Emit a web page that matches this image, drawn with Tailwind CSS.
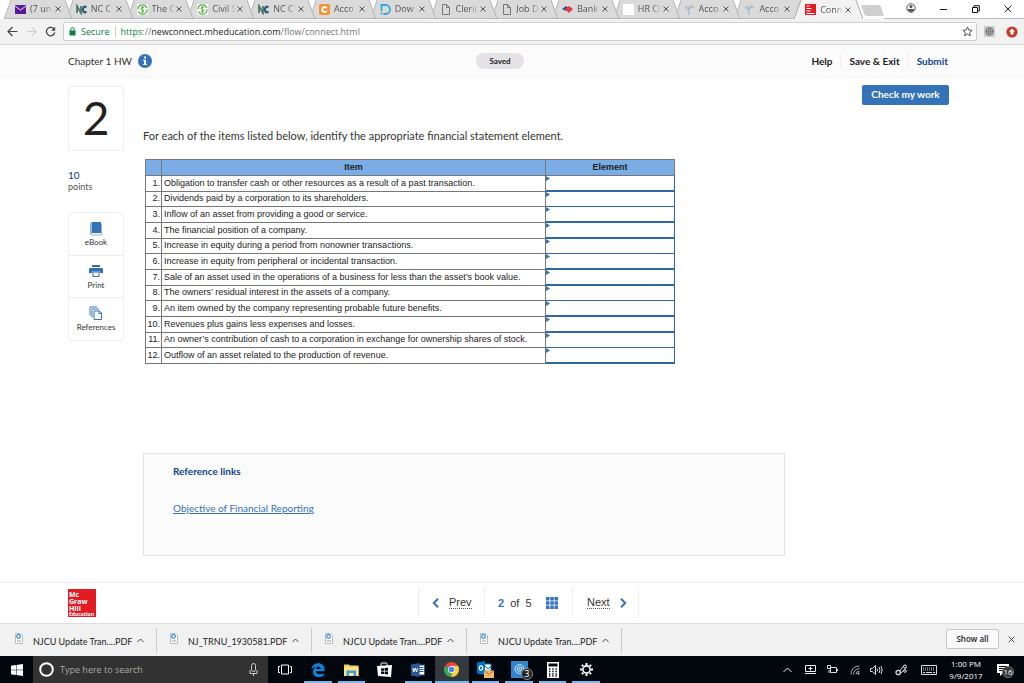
<!DOCTYPE html>
<html lang="en">
<head>
    <meta charset="UTF-8">
    <meta name="viewport" content="width=device-width, initial-scale=1.0">
    <title>Connect</title>
    <script src="https://cdn.jsdelivr.net/npm/@tailwindcss/browser@4"></script>
</head>
<body class="flex min-h-screen flex-col bg-white font-['Lato',sans-serif] text-[#333]">

    <!-- Browser tabs -->
    <div class="flex h-[19px] font-['Open_Sans',sans-serif] text-[9px] text-[#555]">
        <div id="tabs" class="flex w-[863px] shrink-0 pl-[4px]"></div>
        <button aria-label="New tab" class="-ml-[3px] mt-[5px] h-[11px] w-[24px]">
            <svg width="24" height="11" viewBox="0 0 24 11"><path d="M1 0h17q2 0 3 2l3 9H7q-2 0-3-2z" fill="#cfcfcf"/></svg>
        </button>
        <div class="flex flex-1 items-start justify-between border-b border-[#bbb] pl-[22px] pr-[12px]">
            <svg class="mt-[3px]" width="10" height="10" viewBox="0 0 10 10"><circle cx="5" cy="5" r="4.200" fill="none" stroke="#555"/><circle cx="5" cy="3.600" r="1.600" fill="#555"/><path d="M1.500 6h7l-1.500 2.200L5 9 3 8.200z" fill="#555"/></svg>
            <svg class="mt-[5px]" width="8" height="8" viewBox="0 0 8 8"><path d="M0 4.500h7" stroke="#222"/></svg>
            <svg class="mt-[5px]" width="8" height="8" viewBox="0 0 8 8"><path d="M.5 2.500h5v5h-5zM2 2V.7h5.300V6H6" fill="none" stroke="#111"/></svg>
            <svg class="mt-[5px]" width="8" height="8" viewBox="0 0 8 8"><path d="M.7.7l6.600 6.600M7.300.7L.7 7.300" stroke="#222"/></svg>
        </div>
    </div>

    <!-- Toolbar -->
    <div class="flex h-[26px] items-center border-b border-[#d5d5d5] bg-[#f2f2f2] pl-[7px] pr-[6px] font-['Open_Sans',sans-serif] text-[9px]">
        <button aria-label="Back"><svg width="11" height="11" viewBox="0 0 11 11"><path d="M10.500 5.500H1.500M5.500 1L1 5.500 5.500 10" fill="none" stroke="#444" stroke-width="1.200"/></svg></button>
        <button aria-label="Forward" class="ml-[9px]"><svg width="10" height="11" viewBox="0 0 11 11"><path d="M.5 5.500h9M5.500 1L10 5.500 5.500 10" fill="none" stroke="#ccc" stroke-width="1.200"/></svg></button>
        <button aria-label="Reload" class="ml-[8px]"><svg width="11" height="11" viewBox="0 0 11 11"><path d="M9.300 3.600A4.200 4.200 0 1 0 9.700 6.500" fill="none" stroke="#444" stroke-width="1.300"/><path d="M10.200.8v3.900H6.300z" fill="#444"/></svg></button>
        <div class="ml-[7px] flex h-[19px] flex-1 items-center rounded-[2px] border border-[#cfcfcf] bg-white pl-[5px] pr-[3px]">
            <svg width="7" height="9" viewBox="0 0 7 9"><path d="M.5 3.500h6v5h-6z" fill="#0b8043"/><path d="M1.800 4V2.400a1.700 1.700 0 0 1 3.400 0V4" fill="none" stroke="#0b8043"/></svg>
            <span class="ml-[5px] text-[#0b8043]">Secure</span>
            <span class="ml-[5px] h-[11px] w-px bg-[#ccc]"></span>
            <span class="ml-[5px] whitespace-nowrap text-[#777]"><span class="text-[#0b8043]">https</span>://<span class="text-[#222]">newconnect.mheducation.com</span>/flow/connect.html</span>
            <svg class="ml-auto" width="11" height="11" viewBox="0 0 11 11"><path d="M5.500.9l1.300 3.100 3.400.3-2.600 2.200.8 3.300-2.900-1.800-2.900 1.800.8-3.300L.8 4.300l3.400-.3z" fill="none" stroke="#555"/></svg>
        </div>
        <svg class="ml-[7px]" width="11" height="11" viewBox="0 0 11 11"><path d="M0 0h11v11H0z" fill="#ccc"/><circle cx="5.500" cy="5.500" r="4.300" fill="#777"/><path d="M1 4h9M1 7h9M5.500 1v9M3.500 1.500v8M7.500 1.500v8" stroke="#bbb" stroke-width=".5"/></svg>
        <svg class="ml-[11px]" width="12" height="12" viewBox="0 0 12 12"><circle cx="6" cy="6" r="5.600" fill="#c53929"/><path d="M6 2.500l3 3H7.500v3h-3v-3H3z" fill="#fff"/></svg>
    </div>

    <!-- Assignment header -->
    <header class="flex h-[34px] items-center bg-[#fbfbfb] pb-[2px] pl-[68px] pr-[76px] text-[10px] font-bold text-[#222]">
        <div class="flex flex-1 items-center">
            <h1 class="text-[10px] font-normal text-[#333]">Chapter 1 HW</h1>
            <button aria-label="Information" class="ml-[6px]"><svg width="14" height="14" viewBox="0 0 14 14"><circle cx="7" cy="7" r="7" fill="#3573b9"/><path d="M6 2.500h2v2H6zM5 5.700h3v4.300h1v1H5v-1h1V6.700H5z" fill="#fff"/></svg></button>
        </div>
        <span class="mr-[16px] rounded-full bg-[#e4e2e6] px-[13px] text-[8px] leading-[16px]">Saved</span>
        <nav class="flex flex-1 items-center justify-end leading-[14px]">
            <a href="#" class="pr-[8px]">Help</a>
            <a href="#" class="border-l border-[#eee] px-[8px]">Save &amp; Exit</a>
            <a href="#" class="border-l border-[#eee] pl-[8px] text-[#0f4387]">Submit</a>
        </nav>
    </header>

    <!-- Question -->
    <main class="flex flex-1 items-start pl-[68px] pr-[75px]">
        <aside class="w-[56px] shrink-0 pt-[7px]">
            <div class="flex h-[65px] items-center justify-center rounded-[3px] border border-[#eee] pb-[2px] text-[46px] text-[#222]">2</div>
            <div class="mt-[18px] text-[10px] leading-[12px] text-[#0f4387]">10</div>
            <div class="text-[9px] leading-[12px] text-[#555]">points</div>
            <div class="mt-[19px] rounded-[3px] border border-[#eee] text-[8px] leading-[10px] text-[#333]">
                <button class="flex h-[42px] w-full flex-col items-center justify-center gap-[1px]">
                    <svg width="14" height="14" viewBox="0 0 14 14"><path d="M2.500 0H12v11H2.500a1 1 0 0 0 0 2" fill="#3573b9"/><path d="M1.500 12V1.500a1 1 0 0 1 1-1M12.500 1.500v11.500H2.500" fill="none" stroke="#8fb4dd"/></svg>
                    eBook
                </button>
                <button class="flex h-[43px] w-full flex-col items-center justify-center gap-[2px] border-y border-[#eee]">
                    <svg width="14" height="14" viewBox="0 0 14 14"><path d="M3 1h8v2H3zM1 4h12l1 1v4h-3V7.500H3V9H0V5z" fill="#2f6db5"/><path d="M4 8h6v4.500H4z" fill="#fff" stroke="#2f6db5"/></svg>
                    Print
                </button>
                <button class="flex h-[42px] w-full flex-col items-center justify-center gap-[2px]">
                    <svg width="14" height="14" viewBox="0 0 14 14"><path d="M1 9.500V1h7M3 11.500V3h7" fill="none" stroke="#3573b9"/><path d="M5 5h5.500l2 2v6.500H5z" fill="#fff" stroke="#3573b9"/><path d="M10 5v2.500h2.500" fill="none" stroke="#3573b9"/></svg>
                    References
                </button>
            </div>
        </aside>

        <section class="ml-[19px] mr-[77px] min-w-0 flex-1 pt-[50px]">
            <p class="text-[11px] leading-[14px]">For each of the items listed below, identify the appropriate financial statement element.</p>
            <table class="ml-[2px] mt-[16px] h-[205px] w-[530px] table-fixed border-collapse border border-[#777] font-['Liberation_Sans',Arial,sans-serif] text-[9px] leading-[13px] text-[#222]">
                <thead>
                    <tr class="h-[16px] bg-[#7aade6]">
                        <th class="w-[16px] border border-[#777] p-0"></th>
                        <th class="border border-[#777] p-0">Item</th>
                        <th class="w-[129px] border border-[#777] p-0">Element</th>
                    </tr>
                </thead>
                <tbody id="items"></tbody>
            </table>
            <div class="mt-[89px] h-[103px] border border-[#e4e4e4] bg-[#fbfbfb] px-[29px] pt-[11px] leading-[12px]">
                <h2 class="text-[10px] font-bold text-[#0f4387]">Reference links</h2>
                <a href="#" class="mt-[25px] inline-block text-[10px] text-[#3573b9] underline">Objective of Financial Reporting</a>
            </div>
        </section>

        <button class="mt-[6px] h-[20px] w-[87px] shrink-0 rounded-[2px] bg-[#3573b9] pb-[2px] text-[10px] font-bold text-white">Check my work</button>
    </main>

    <!-- Question navigation -->
    <footer class="flex h-[41px] items-center border-t border-[#eee] pl-[68px] text-[11px]">
        <div class="h-[28px] w-[28px] shrink-0 bg-[#e31b23] pl-[1px] pt-[2px] font-['Open_Sans',sans-serif] text-[7px] font-bold leading-[7px] text-white">
            Mc<br>Graw<br>Hill<br><span class="block text-[5px] leading-[4px]">Education</span>
        </div>
        <nav class="ml-[322px] flex h-[30px] items-stretch border-x border-[#eee] font-['Liberation_Sans',Arial,sans-serif]">
            <a href="#" class="flex w-[65px] items-center pl-[13px]">
                <svg width="7" height="10" viewBox="0 0 7 10"><path d="M6 .8L1.800 5 6 9.200" fill="none" stroke="#3573b9" stroke-width="2"/></svg>
                <span class="ml-[10px] border-b border-dotted border-[#555] leading-[11px]">Prev</span>
            </a>
            <div class="flex w-[89px] items-center border-x border-[#eee] pl-[13px]">
                <span><b class="text-[#3573b9]">2</b>&nbsp; of &nbsp;5</span>
                <button aria-label="All questions" class="ml-auto mr-[14px]"><svg width="12" height="12" viewBox="0 0 12 12"><path d="M0 0h3.500v3.500H0zM4.300 0h3.500v3.500H4.300zM8.500 0H12v3.500H8.500zM0 4.300h3.500v3.500H0zM4.300 4.300h3.500v3.500H4.300zM8.500 4.300H12v3.500H8.500zM0 8.500h3.500V12H0zM4.300 8.500h3.500V12H4.300zM8.500 8.500H12V12H8.500z" fill="#3573b9"/></svg></button>
            </div>
            <a href="#" class="flex w-[65px] items-center pl-[14px]">
                <span class="mr-[10px] border-b border-dotted border-[#555] leading-[11px]">Next</span>
                <svg width="7" height="10" viewBox="0 0 7 10"><path d="M1 .8L5.200 5 1 9.200" fill="none" stroke="#3573b9" stroke-width="2"/></svg>
            </a>
        </nav>
    </footer>

    <!-- Downloads shelf -->
    <div class="flex h-[33px] items-center border-t border-[#ddd] bg-[#f1f1f1] text-[9px] text-[#222]">
        <div id="downloads" class="flex pl-[2px]"></div>
        <button class="mb-[2px] ml-auto h-[20px] w-[53px] rounded-[2px] border border-[#c8c8c8] bg-[#fafafa] font-['Open_Sans',sans-serif] text-[8px] font-semibold">Show all</button>
        <button aria-label="Close" class="mb-[2px] ml-[9px] mr-[9px]"><svg width="7" height="7" viewBox="0 0 7 7"><path d="M.7.7l5.600 5.600M6.300.7L.7 6.300" stroke="#444"/></svg></button>
    </div>

    <!-- Taskbar -->
    <div class="flex h-[27px] items-stretch bg-[#02060d] font-['Open_Sans',sans-serif] text-[8px] text-white">
        <button aria-label="Start" class="flex w-[33px] items-center justify-center"><svg width="12" height="12" viewBox="0 0 12 12"><path d="M0 1.700l5-.7v4.700H0zM5.500.9L12 0v5.700H5.500zM0 6.200h5v4.700l-5-.7zM5.500 6.200H12V12l-6.500-.9z" fill="#fff"/></svg></button>
        <div class="flex w-[235px] items-center bg-[#323232] pl-[6px] pr-[10px]">
            <svg width="15" height="15" viewBox="0 0 15 15"><circle cx="7.500" cy="7.500" r="6.300" fill="none" stroke="#fff" stroke-width="2"/></svg>
            <input type="text" aria-label="Search" placeholder="Type here to search" class="ml-[6px] min-w-0 flex-1 bg-transparent text-[9px] placeholder:text-[#aaa]">
            <svg width="9" height="13" viewBox="0 0 9 13"><rect x="2.500" y=".5" width="4" height="8" rx="2" fill="none" stroke="#ccc"/><path d="M1 7v3.500h7V7M4.500 10.500V13" fill="none" stroke="#ccc"/></svg>
        </div>
        <button aria-label="Task view" class="flex w-[33px] items-center justify-center"><svg width="14" height="11" viewBox="0 0 14 11"><path d="M3.500 1h7v9h-7zM2 2.500H.5v6H2M12 2.500h1.500v6H12" fill="none" stroke="#fff"/></svg></button>
        <div class="grid w-[302px] grid-cols-9">
            <button aria-label="Edge" class="mx-[3px] flex items-center justify-center border-b-2 border-[#76b9ed] pt-[2px]"><svg width="14" height="14" viewBox="0 0 14 14"><path d="M.4 6.300C.9 2.500 3.700.2 7.200.2c4 0 6.400 2.700 6.400 6.600v1.500H4.900c.2 2 1.700 3 3.800 3 1.500 0 2.700-.4 3.900-1.100v2.700c-1.300.7-2.800 1.100-4.600 1.100-3.700 0-6-2.100-6-5.300 0-2.200 1.200-4 3-5C2.900 4.200 1.400 5 .4 6.300zM5 6h4.700c0-1.600-.8-2.600-2.300-2.600S5.200 4.500 5 6z" fill="#0b84e0"/></svg></button>
            <button aria-label="File Explorer" class="mx-[3px] flex items-center justify-center border-b-2 border-[#76b9ed] pt-[2px]"><svg width="15" height="14" viewBox="0 0 15 14"><path d="M0 1.500h5l1 1h8.500V13H0z" fill="#f5cf62"/><path d="M0 4h14.500v9H0z" fill="#fce08a"/><path d="M2.500 13V7.500h9.500V13H9.500v-3H5v3z" fill="#3a9fe0"/></svg></button>
            <button aria-label="Store" class="mx-[3px] flex items-center justify-center"><svg width="15" height="16" viewBox="0 0 15 16"><path d="M0 4l15-1-1 12-13-1z" fill="#fff"/><path d="M4 4V2q0-1 1-1h4q1 0 1 1v2" fill="none" stroke="#fff"/><path d="M4 6.500l3-.3v2.600H4zM7.600 6.100l3.400-.3v3H7.600zM4 9.400h3V12l-3-.3zM7.600 9.400H11v3l-3.400-.3z" fill="#02060d"/></svg></button>
            <button aria-label="Word" class="mx-[3px] flex items-center justify-center border-b-2 border-[#76b9ed] pt-[2px]"><svg width="14" height="14" viewBox="0 0 14 14"><path d="M7 2h6.500v10H7z" fill="#fff" stroke="#2b579a"/><path d="M8 4.500h4.500M8 6.500h4.500M8 8.500h4.500" stroke="#2b579a"/><path d="M0 1.500L8.500 0v14L0 12.500z" fill="#2b579a"/><path d="M1.800 5l1 4 1.400-4 1.400 4 1-4" fill="none" stroke="#fff"/></svg></button>
            <button aria-label="Chrome" class="flex items-center justify-center border-b-2 border-[#76b9ed] bg-[#34393f] pt-[2px]"><svg width="15" height="15" viewBox="0 0 15 15"><path d="M7.500 7.500L1 3.700a7.500 7.500 0 0 1 13 0z" fill="#e5453a"/><path d="M7.500 7.500L1 3.700A7.500 7.500 0 0 0 7.500 15z" fill="#37a853"/><path d="M7.500 7.500V15A7.500 7.500 0 0 0 14 3.700H7.500z" fill="#fbcb3c"/><circle cx="7.500" cy="7.500" r="3.500" fill="#fff"/><circle cx="7.500" cy="7.500" r="2.800" fill="#4285f4"/></svg></button>
            <button aria-label="Outlook" class="mx-[3px] flex items-center justify-center border-b-2 border-[#76b9ed] pt-[2px]"><svg width="17" height="17" viewBox="0 0 17 17"><path d="M7 3h7v7H7z" fill="#fff" stroke="#0072c6"/><path d="M8 5l3 3 3-3" fill="none" stroke="#0072c6"/><path d="M0 1.500L8 0v14l-8-1.500z" fill="#0072c6"/><ellipse cx="4" cy="7" rx="1.700" ry="2.200" fill="none" stroke="#fff" stroke-width="1.200"/><path d="M7 9.500h10V17H7z" fill="#f0b96e"/><path d="M7 9.500l5 4 5-4" fill="none" stroke="#a8783a"/></svg></button>
            <button aria-label="Camera, 3 notifications" class="relative mx-[3px] flex items-center justify-center border-b-2 border-[#76b9ed] pt-[2px]">
                <svg width="17" height="17" viewBox="0 0 17 17"><path d="M0 0h17v17H0z" fill="#2f86cc"/><circle cx="8.500" cy="8" r="4.500" fill="none" stroke="#fff" stroke-width=".8"/><circle cx="8.500" cy="8" r="2.300" fill="none" stroke="#fff" stroke-width=".8"/><circle cx="8.500" cy="8" r=".8" fill="#fff"/></svg>
                <span class="absolute right-0 bottom-[1px] h-[12px] w-[12px] rounded-full border border-[#888] bg-[#222] text-[9px] leading-[10px]">3</span>
            </button>
            <button aria-label="Calculator" class="mx-[3px] flex items-center justify-center border-b-2 border-[#76b9ed] pt-[2px]"><svg width="12" height="16" viewBox="0 0 12 16"><path d="M0 0h12v16H0z" fill="#fff"/><path d="M1.500 1.500h9v3h-9z" fill="#02060d"/><path d="M2 7h8M2 9.500h8M2 12h8M2 14h8" stroke="#02060d" stroke-width="1.300" stroke-dasharray="1.400 1.800"/></svg></button>
            <button aria-label="Settings" class="mx-[3px] flex items-center justify-center border-b-2 border-[#76b9ed] pt-[2px]"><svg width="13" height="13" viewBox="0 0 13 13"><circle cx="6.500" cy="6.500" r="3.600" fill="none" stroke="#fff" stroke-width="1.600"/><path d="M6.500 0v2M6.500 11v2M0 6.500h2M11 6.500h2M1.900 1.900l1.400 1.400M9.700 9.700l1.400 1.400M11.100 1.900L9.700 3.300M3.300 9.700l-1.400 1.400" stroke="#fff" stroke-width="2"/></svg></button>
        </div>
        <div class="ml-auto flex items-center pr-[10px]">
            <svg width="9" height="6" viewBox="0 0 9 6"><path d="M.5 5l4-4 4 4" fill="none" stroke="#eee"/></svg>
            <svg class="ml-[13px]" width="11" height="9" viewBox="0 0 11 9"><path d="M.5.500h10v6H.5zM0 8.500h11M3.500 3.500h4M5.500 1.500v4" fill="none" stroke="#eee"/></svg>
            <svg class="ml-[11px]" width="11" height="9" viewBox="0 0 11 9"><path d="M3.500 2.500h6v5h-6zM10.500 4v2M2 5v3M.5.500h3v3h-3z" fill="none" stroke="#ddd"/></svg>
            <svg class="ml-[12px]" width="10" height="10" viewBox="0 0 10 10"><path d="M1 9.500A8 8 0 0 1 9.500 1M3.500 9.500a6 6 0 0 1 6-6M6 9.500a3.500 3.500 0 0 1 3.500-3.500" fill="none" stroke="#aaa"/><circle cx="8.500" cy="8.500" r="1" fill="#eee"/></svg>
            <svg class="ml-[10px]" width="13" height="10" viewBox="0 0 13 10"><path d="M.5 3.500h2l3-3v9l-3-3h-2zM7 3.500q1 1.500 0 3M9 2q2 3 0 6M11 1q2.500 4 0 8" fill="none" stroke="#ddd"/></svg>
            <svg class="ml-[12px]" width="13" height="12" viewBox="0 0 13 12"><path d="M4.500 7L9 1.500M6 9l5-5.500" fill="none" stroke="#ddd"/><circle cx="3.200" cy="8.500" r="2.200" fill="none" stroke="#ddd" stroke-width="1.300"/><circle cx="10" cy="2.500" r="1.500" fill="none" stroke="#ddd"/><circle cx="10" cy="7" r="1.300" fill="none" stroke="#ddd"/></svg>
            <svg class="ml-[13px]" width="16" height="10" viewBox="0 0 16 10"><path d="M.5.500h15v9H.5z" fill="none" stroke="#ddd"/><path d="M2 3h12M2 5h12" stroke="#ddd" stroke-dasharray="1 1"/><path d="M2 7.500h2M5 7.500h6M12 7.500h2" stroke="#ddd"/></svg>
            <div class="ml-[9px] w-[40px] text-center leading-[12px] whitespace-nowrap">1:00 PM<br>9/9/2017</div>
            <button aria-label="16 notifications" class="relative ml-[11px] h-[16px] w-[17px]">
                <svg width="12" height="12" viewBox="0 0 12 12"><path d="M0 0h12v9H6L3 12V9H0z" fill="#fff"/><path d="M2 2.500h8M2 4.500h8M2 6.500h5" stroke="#02060d"/></svg>
                <span class="absolute right-0 bottom-0 h-[12px] w-[12px] rounded-full border border-[#777] bg-[#333] text-[8px] leading-[10px]">16</span>
            </button>
        </div>
    </div>

    <script>
        const mail = '<path d="M0 1h11v9H0z" fill="#5a1a96"/><path d="M0 2l5.500 4L11 2" fill="none" stroke="#e6d9f2"/>';
        const nc = '<path d="M1 9V2l4 7V2" fill="none" stroke="#4b7a6b" stroke-width="1.800"/><path d="M10.500 3.200Q7 1.500 7 5.500t3.500 2.300" fill="none" stroke="#33577c" stroke-width="2.200"/>';
        const seal = '<path d="M0 0h11v11H0z" fill="#fff"/><circle cx="5.500" cy="5.500" r="4.600" fill="none" stroke="#5cb849" stroke-width="1.400" stroke-dasharray="12 2.500"/><path d="M7 3.500q-3-1-3 .7t1.700 1.500q1.800.5.8 1.800T4 7.500M5.500 2v7" fill="none" stroke="#5cb849"/>';
        const orange = '<rect width="11" height="11" rx="2" fill="#f6922f"/><path d="M7.800 3.800a2.600 2.600 0 1 0 0 3.400" fill="none" stroke="#fff" stroke-width="2"/>';
        const dice = '<path d="M1.500 7V1h4a4.500 4.500 0 0 1 0 9H4.500M1.500 8.500v2M3.500 10h1" fill="none" stroke="#2fa8dc" stroke-width="1.800"/>';
        const page = '<path d="M2.500.5h4l3 3v7h-7zM6.500.5v3h3" fill="none" stroke="#777"/>';
        const bank = '<path d="M0 5l4-3 3 2-3 3z" fill="#2b4da0"/><path d="M3 5l4-3 4 3-4 4z" fill="#e8373e"/>';
        const blank = '<path d="M0 0h11v11H0z" fill="#fff"/>';
        const palm = '<path d="M1 4q3-3 5 0 2-3 4 0M6 4q-2 3-1 7M2 6q2-2 4-1" fill="none" stroke="#8fb0cc"/><path d="M6 1.500h3" stroke="#efb36a"/>';
        const mgh = '<path d="M0 0h11v11H0z" fill="#e31b23"/><path d="M1.500 2h3M1.500 4.500h5M1.500 7h4M1.500 9.500h8" stroke="#fff"/>';

        const tabs = [
            [mail, '(7 un'], [nc, 'NC C'], [seal, 'The C'], [seal, 'Civil S'], [nc, 'NC C'], [orange, 'Acco'], [dice, 'Dow'],
            [page, 'Cleric'], [page, 'Job D'], [bank, 'Bank'], [blank, 'HR Cl'], [palm, 'Acco'], [palm, 'Acco'], [mgh, 'Conn'],
        ];

        const items = [
            'Obligation to transfer cash or other resources as a result of a past transaction.',
            'Dividends paid by a corporation to its shareholders.',
            'Inflow of an asset from providing a good or service.',
            'The financial position of a company.',
            'Increase in equity during a period from nonowner transactions.',
            'Increase in equity from peripheral or incidental transaction.',
            'Sale of an asset used in the operations of a business for less than the asset’s book value.',
            'The owners’ residual interest in the assets of a company.',
            'An item owned by the company representing probable future benefits.',
            'Revenues plus gains less expenses and losses.',
            'An owner’s contribution of cash to a corporation in exchange for ownership shares of stock.',
            'Outflow of an asset related to the production of revenue.',
        ];

        const downloads = ['NJCU Update Tran....PDF', 'NJ_TRNU_1930581.PDF', 'NJCU Update Tran....PDF', 'NJCU Update Tran....PDF'];

        // slanted edge that stands between two tabs
        function edge(kind) {
            const shapes = {
                first: '<path d="M0 19L7 0h1v19z" fill="#dadada"/><path d="M0 19L7 0M0 18.500h8" fill="none" stroke="#bbb"/>',
                mid: '<path d="M0 0h8v19H0z" fill="#dadada"/><path d="M0 0h8L4.500 11z" fill="#fff"/><path d="M0 0l7 19M8 0L4.500 11M0 18.500h8" fill="none" stroke="#b5b5b5"/>',
                active: '<path d="M0 0h8v19H0z" fill="#dadada"/><path d="M0 19L7 0h1v19z" fill="#f2f2f2"/><path d="M0 19L7 0" stroke="#aaa"/>',
                last: '<path d="M0 0h1l7 19H0z" fill="#f2f2f2"/><path d="M1 0l7 19" stroke="#aaa"/>',
            };
            return `<svg class="shrink-0" width="8" height="19" viewBox="0 0 8 19">${shapes[kind]}</svg>`;
        }

        document.getElementById('tabs').innerHTML = tabs.map(([icon, title], i) => {
            const active = i === tabs.length - 1;
            const look = active ? 'bg-[#f2f2f2]' : 'border-b border-[#bbb] bg-[#dadada]';
            return edge(i === 0 ? 'first' : active ? 'active' : 'mid') + `
                <div class="flex min-w-0 flex-1 items-center pl-[3px] pr-[4px] ${look}">
                    <svg class="shrink-0" width="11" height="11" viewBox="0 0 11 11">${icon}</svg>
                    <span class="ml-[4px] w-[24px] shrink-0 overflow-hidden whitespace-nowrap mask-r-from-60%">${title}</span>
                    <button aria-label="Close tab" class="ml-auto shrink-0"><svg width="6" height="6" viewBox="0 0 6 6"><path d="M.5.500l5 5M5.500.500l-5 5" stroke="#555"/></svg></button>
                </div>`;
        }).join('') + edge('last');

        document.getElementById('items').innerHTML = items.map((text, i) => `
            <tr>
                <td class="border border-[#777] p-0 pr-[1px] text-right">${i + 1}.</td>
                <td class="border border-[#777] p-0 pl-[2px] whitespace-nowrap" id="item${i}">${text}</td>
                <td class="relative border border-[#2f66a8] bg-[#2f66a8] p-0 align-top">
                    <select aria-labelledby="item${i}" class="block h-[14px] w-full appearance-none bg-white"><option></option></select>
                    <svg class="pointer-events-none absolute top-0 left-0" width="4" height="5" viewBox="0 0 4 5"><path d="M0 0l4 2.500L0 5z" fill="#3573b9"/></svg>
                </td>
            </tr>`).join('');

        document.getElementById('downloads').innerHTML = downloads.map(name => `
            <div class="flex h-[25px] w-[155px] items-center border-r border-[#ccc] pl-[13px] pr-[12px]">
                <svg class="mb-[3px]" width="8" height="11" viewBox="0 0 8 11"><path d="M.5.500h5l2 2v8h-7z" fill="#fff" stroke="#bbb"/><circle cx="3.500" cy="3.500" r="1.800" fill="none" stroke="#2b88d8" stroke-width="1.200"/><path d="M2 8h4" stroke="#999"/></svg>
                <a href="#" class="ml-[10px] pt-[3px] whitespace-nowrap">${name}</a>
                <button aria-label="Download options" class="ml-auto"><svg width="7" height="5" viewBox="0 0 7 5"><path d="M.5 4l3-3 3 3" fill="none" stroke="#444"/></svg></button>
            </div>`).join('');
    </script>
</body>
</html>
